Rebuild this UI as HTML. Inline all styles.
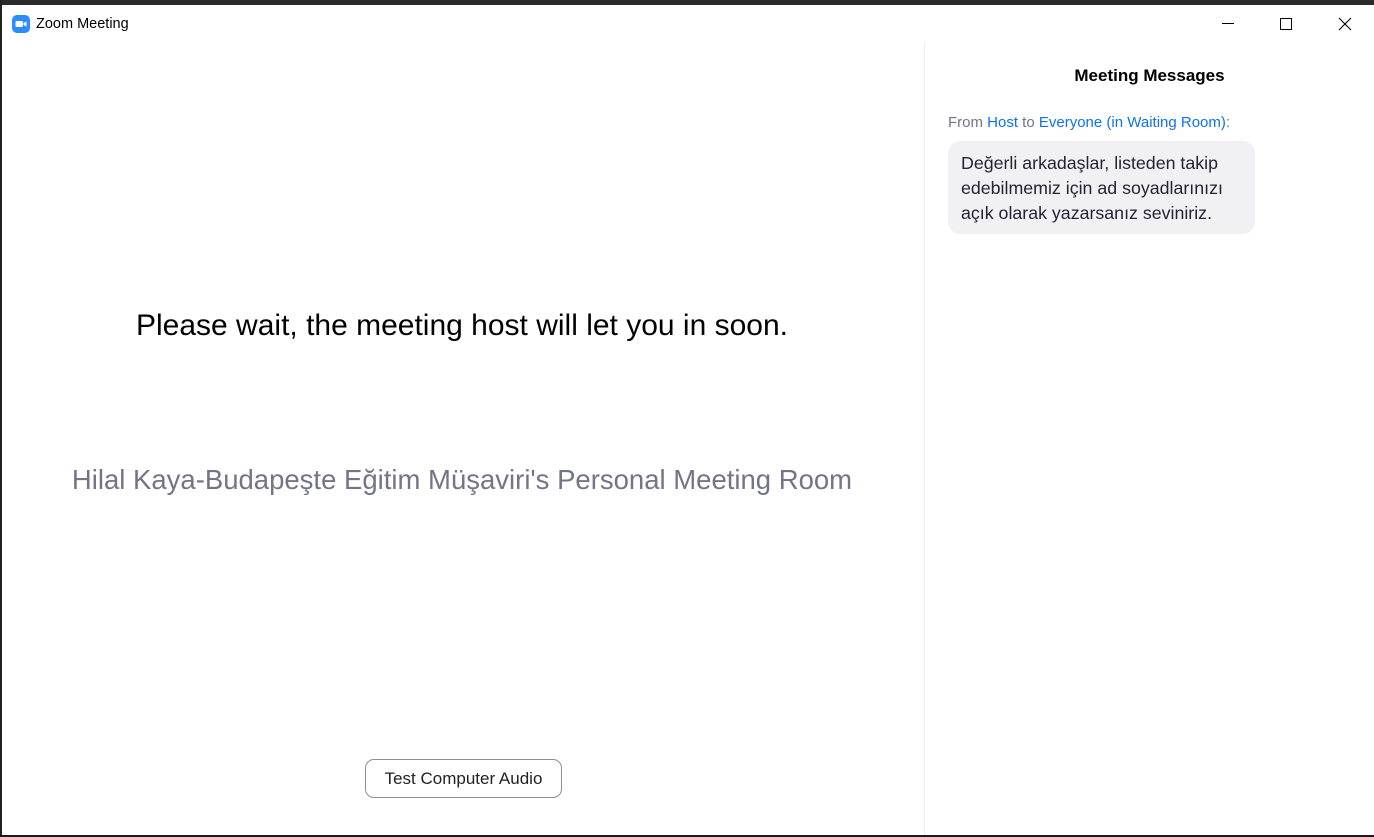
<!DOCTYPE html>
<html><head><meta charset="utf-8"><style>
*{margin:0;padding:0;box-sizing:border-box}
body{width:1374px;height:837px;overflow:hidden;background:#fff;font-family:"Segoe UI","Liberation Sans","DejaVu Sans",sans-serif;position:relative}
.top{position:absolute;left:0;top:0;width:1374px;height:5px;background:#2b2b2b}
.bot{position:absolute;left:0;top:835px;width:1374px;height:2px;background:#1a1a1a}
.lft{position:absolute;left:0;top:0;width:2px;height:837px;background:#222}
.ab{position:absolute;white-space:nowrap}
.sep{position:absolute;left:924px;top:42px;width:1px;height:793px;background:#ececec}
</style></head><body>
<div class="top"></div><div class="lft"></div><div class="bot"></div>
<svg class="ab" style="left:12px;top:15px" width="18" height="18" viewBox="0 0 18 18"><rect width="18" height="18" rx="5" fill="#2d8cff"/><rect x="3.5" y="6" width="7.5" height="6" rx="1.2" fill="#fff"/><path d="M11.5 8.3 L14.5 6.3 V11.7 L11.5 9.7Z" fill="#fff"/></svg>
<div class="ab" style="left:36px;top:16px;font-size:14.5px;color:#000">Zoom Meeting</div>
<div class="ab" style="left:1222px;top:23px;width:12px;height:1px;background:#000"></div>
<div class="ab" style="left:1280px;top:18px;width:12px;height:12px;border:1px solid #000"></div>
<svg class="ab" style="left:1338px;top:17px" width="14" height="14"><path d="M1 1L13 13M13 1L1 13" stroke="#000" stroke-width="1.1"/></svg>
<div class="sep"></div>
<div class="ab" style="left:0;width:924px;text-align:center;top:309px;font-size:30px;color:#000">Please wait, the meeting host will let you in soon.</div>
<div class="ab" style="left:0;width:924px;text-align:center;top:464px;font-size:27.5px;color:#747487">Hilal Kaya-Budapeşte Eğitim Müşaviri's Personal Meeting Room</div>
<div class="ab" style="left:365px;top:759px;width:197px;height:39px;border:1px solid #8e8e8e;border-radius:9px;font-size:17px;color:#222;text-align:center;line-height:37px">Test Computer Audio</div>
<div class="ab" style="left:925px;width:449px;text-align:center;top:66px;font-size:17px;font-weight:bold;color:#000">Meeting Messages</div>
<div class="ab" style="left:948px;top:114px;font-size:15px;color:#747487">From <span style="color:#0e72ed">Host</span> to <span style="color:#0e72ed">Everyone (in Waiting Room)</span>:</div>
<div class="ab" style="left:948px;top:141px;width:307px;height:93px;background:#f1f1f4;border-radius:12px;padding:10px 13px;font-size:17.8px;line-height:25px;color:#232333;white-space:normal">Değerli arkadaşlar, listeden takip edebilmemiz için ad soyadlarınızı açık olarak yazarsanız seviniriz.</div>
</body></html>
